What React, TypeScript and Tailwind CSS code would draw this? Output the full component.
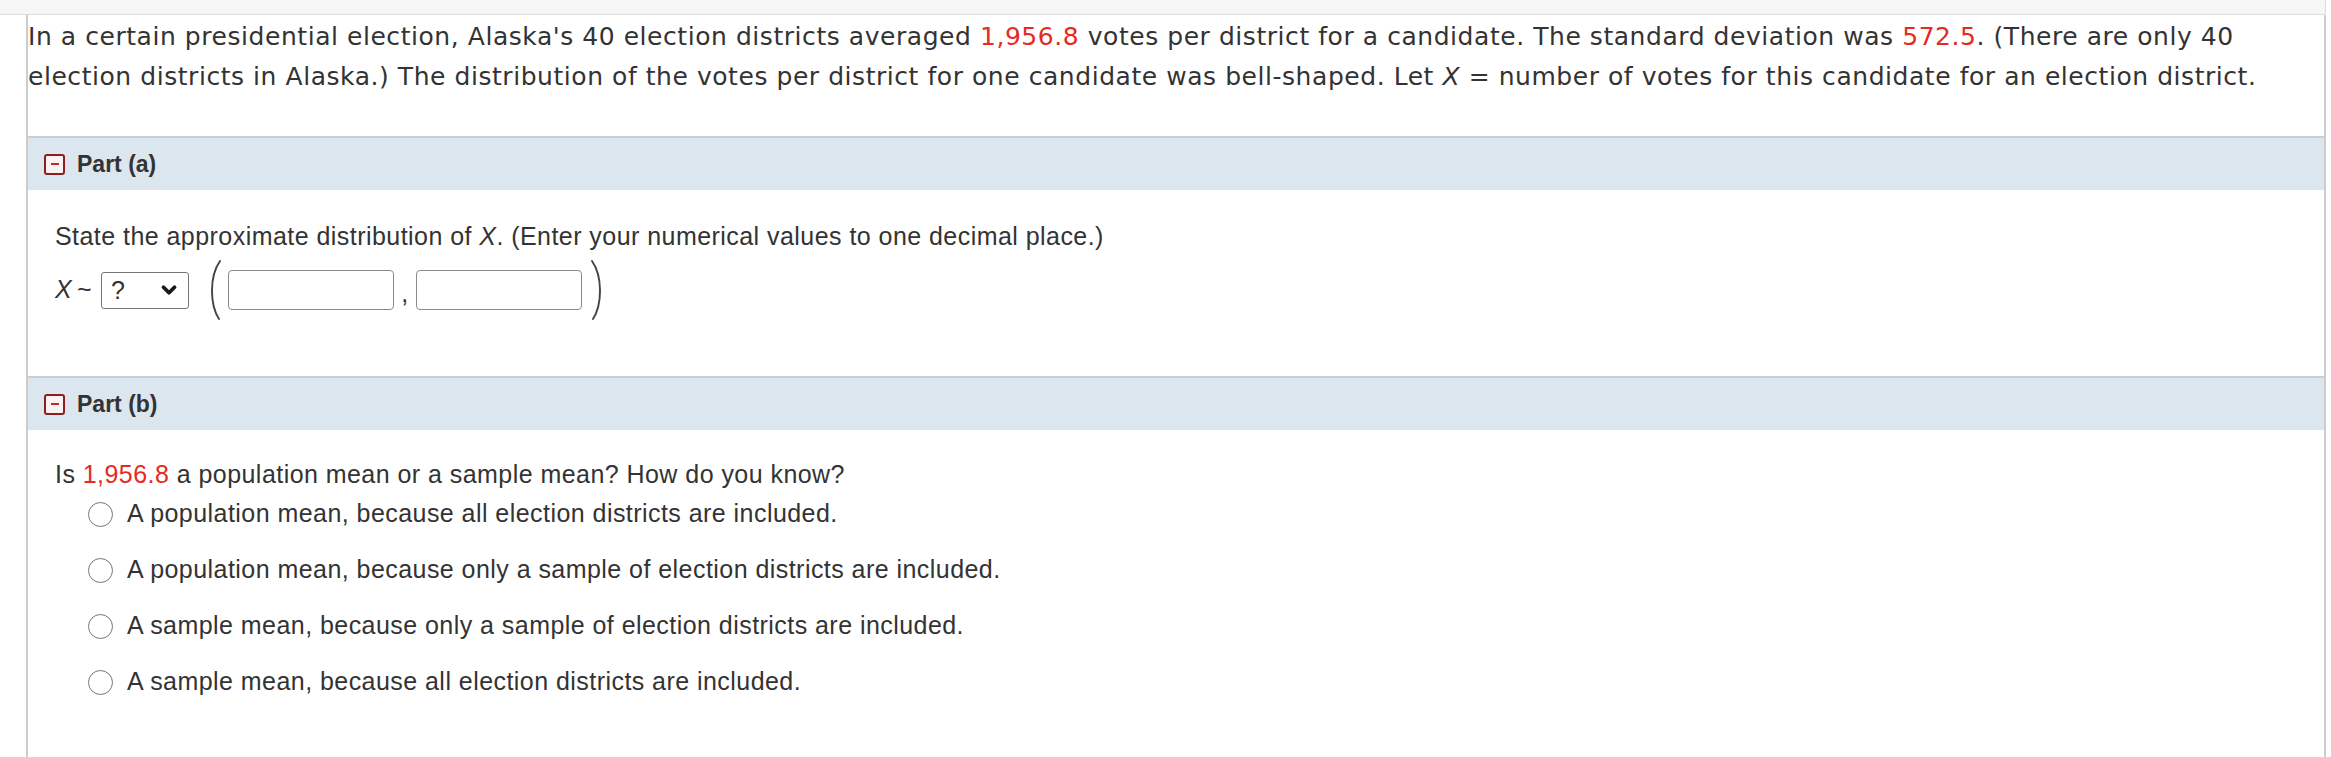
import { ChevronDown } from 'lucide-react'

const options = [
  'A population mean, because all election districts are included.',
  'A population mean, because only a sample of election districts are included.',
  'A sample mean, because only a sample of election districts are included.',
  'A sample mean, because all election districts are included.',
]

function CollapseIcon() {
  return (
    <div className="w-[21px] h-[21px] border-2 border-[#8a1f1f] rounded-[3px] bg-[#fbf3f3] flex items-center justify-center shrink-0">
      <div className="w-[8px] h-[2px] bg-[#b3302c]" />
    </div>
  )
}

function PartHeader({ label }: { label: string }) {
  return (
    <div className="h-[54px] border-t-2 border-[#cccccc] bg-[#dce6ef] flex items-center pl-[16px] gap-[12px]">
      <CollapseIcon />
      <span className="font-['Liberation_Sans',Arial,sans-serif] font-bold text-[23px] text-[#333333]">{label}</span>
    </div>
  )
}

function Paren({ right = false }: { right?: boolean }) {
  return (
    <svg width="14" height="60" viewBox="0 0 14 60" className={right ? 'scale-x-[-1]' : ''}>
      <path d="M13 1 C2.5 16, 2.5 44, 12 59" fill="none" stroke="#444" strokeWidth="1.9" strokeLinecap="round" />
    </svg>
  )
}

function Radio() {
  return <div className="w-[25px] h-[25px] rounded-full border-[1.5px] border-[#767676] bg-white shrink-0" />
}

export default function App() {
  return (
    <div className="h-[757px] flex flex-col bg-white overflow-hidden text-[#333333]">
      <div className="h-[15px] w-[2326px] bg-[#f6f6f6] border-b border-r border-[#dddddd] rounded-br-[3px] shrink-0" />
      <div className="flex-1 ml-[26px] w-[2300px] border-l-2 border-r-2 border-[#cccccc] flex flex-col">
        {/* intro */}
        <div className="h-[121px] pt-[2px] font-['DejaVu_Sans',Verdana,sans-serif] text-[25px] tracking-[0.55px] leading-[40px] whitespace-nowrap">
          In a certain presidential election, Alaska's 40 election districts averaged{' '}
          <span className="text-[#e62a1f]">1,956.8</span> votes per district for a candidate. The standard deviation was{' '}
          <span className="text-[#e62a1f]">572.5</span>. (There are only 40
          <br />
          election districts in Alaska.) The distribution of the votes per district for one candidate was bell-shaped. Let <i>X</i> = number of votes for this candidate for an election district.
        </div>

        {/* part a */}
        <PartHeader label="Part (a)" />
        <div className="h-[186px] pl-[27px] pt-[32px] font-['Liberation_Sans',Arial,sans-serif] text-[25px] tracking-[0.45px]">
          <div className="leading-[28px]">
            State the approximate distribution of <i>X</i>. (Enter your numerical values to one decimal place.)
          </div>
          <div className="mt-[10px] flex items-center h-[60px]">
            <i className="w-[22px]">X</i>
            <span className="w-[24px]">~</span>
            <div className="w-[88px] h-[37px] border border-[#767676] rounded-[3px] flex items-center justify-between pl-[9px] pr-[8px]">
              <span className="leading-none">?</span>
              <ChevronDown className="w-[22px] h-[22px] text-[#1a1a1a]" strokeWidth={4.2} />
            </div>
            <div className="ml-[18px] mr-[7px] flex items-center"><Paren /></div>
            <div className="w-[166px] h-[40px] border border-[#8a8a8a] rounded-[4px] bg-white" />
            <span className="w-[22px] text-center self-end mb-[14px] leading-none">,</span>
            <div className="w-[166px] h-[40px] border border-[#8a8a8a] rounded-[4px] bg-white" />
            <div className="ml-[9px] flex items-center"><Paren right /></div>
          </div>
        </div>

        {/* part b */}
        <PartHeader label="Part (b)" />
        <div className="pl-[27px] pt-[32px] font-['Liberation_Sans',Arial,sans-serif] text-[25px] tracking-[0.45px]">
          <div className="leading-[24px]">
            Is <span className="text-[#e62a1f]">1,956.8</span> a population mean or a sample mean? How do you know?
          </div>
          <div className="flex flex-col pl-[33px]">
            {options.map(o => (
              <label key={o} className="h-[56px] flex items-center gap-[14px]">
                <Radio />
                <span>{o}</span>
              </label>
            ))}
          </div>
        </div>
      </div>
    </div>
  )
}
